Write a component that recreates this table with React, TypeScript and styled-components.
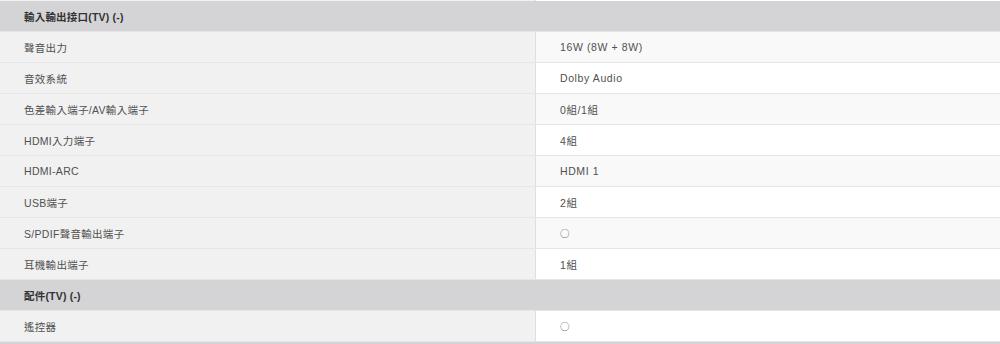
import React from "react";
import styled, { createGlobalStyle } from "styled-components";

const Global = createGlobalStyle`
  html, body { margin: 0; padding: 0; background: #ffffff; }
  body {
    font-family: "Liberation Sans", "Noto Sans CJK TC", sans-serif;
    overflow: hidden;
  }
`;

const Table = styled.div`
  width: 1000px;
  display: flex;
  flex-direction: column;
`;

const TopEdge = styled.div`
  height: 1px;
  display: grid;
  grid-template-columns: 536px 1fr;
  & > div:first-child {
    background: #f1f1f1;
    border-right: 1px solid #dedede;
  }
`;

const SectionHeader = styled.div`
  height: 30px;
  background: #d4d4d6;
  border-bottom: 1px solid #e6e6e6;
  display: flex;
  align-items: center;
  padding-left: 24px;
  font-size: 10.5px;
  font-weight: bold;
  color: #333333;
  letter-spacing: 0.2px;
`;

const Row = styled.div<{ $shade: boolean }>`
  height: 30px;
  display: grid;
  grid-template-columns: 536px 1fr;
  border-bottom: 1px solid #e6e6e6;
  background: ${(p) => (p.$shade ? "#f9f9f9" : "#ffffff")};
`;

const Label = styled.div`
  display: flex;
  align-items: center;
  padding-left: 24px;
  background: #f1f1f1;
  border-right: 1px solid #dedede;
  font-size: 10.5px;
  color: #505050;
  letter-spacing: 0.3px;
`;

const Value = styled.div<{ $symbol: boolean }>`
  display: flex;
  align-items: center;
  padding-left: 24px;
  font-family: ${(p) =>
    p.$symbol
      ? `"Noto Sans CJK TC", sans-serif`
      : `"Liberation Sans", "Noto Sans CJK TC", sans-serif`};
  font-size: ${(p) => (p.$symbol ? "9.5px" : "10.5px")};
  color: #505050;
  letter-spacing: 0.6px;
`;

type Item = [string, string];

const sections: { title: string; items: Item[] }[] = [
  {
    title: "輸入輸出接口(TV) (-)",
    items: [
      ["聲音出力", "16W (8W + 8W)"],
      ["音效系統", "Dolby Audio"],
      ["色差輸入端子/AV輸入端子", "0組/1組"],
      ["HDMI入力端子", "4組"],
      ["HDMI-ARC", "HDMI 1"],
      ["USB端子", "2組"],
      ["S/PDIF聲音輸出端子", "○"],
      ["耳機輸出端子", "1組"],
    ],
  },
  {
    title: "配件(TV) (-)",
    items: [["遙控器", "○"]],
  },
  { title: "", items: [] },
];

export default function App() {
  let idx = 0;
  return (
    <>
      <Global />
      <Table>
        <TopEdge>
          <div />
          <div />
        </TopEdge>
        {sections.map((s, si) => {
          idx++;
          return (
            <React.Fragment key={si}>
              <SectionHeader>{s.title}</SectionHeader>
              {s.items.map(([k, v]) => {
                idx++;
                return (
                  <Row key={k} $shade={idx % 2 === 0}>
                    <Label>{k}</Label>
                    <Value $symbol={v === "○"}>{v}</Value>
                  </Row>
                );
              })}
            </React.Fragment>
          );
        })}
      </Table>
    </>
  );
}
